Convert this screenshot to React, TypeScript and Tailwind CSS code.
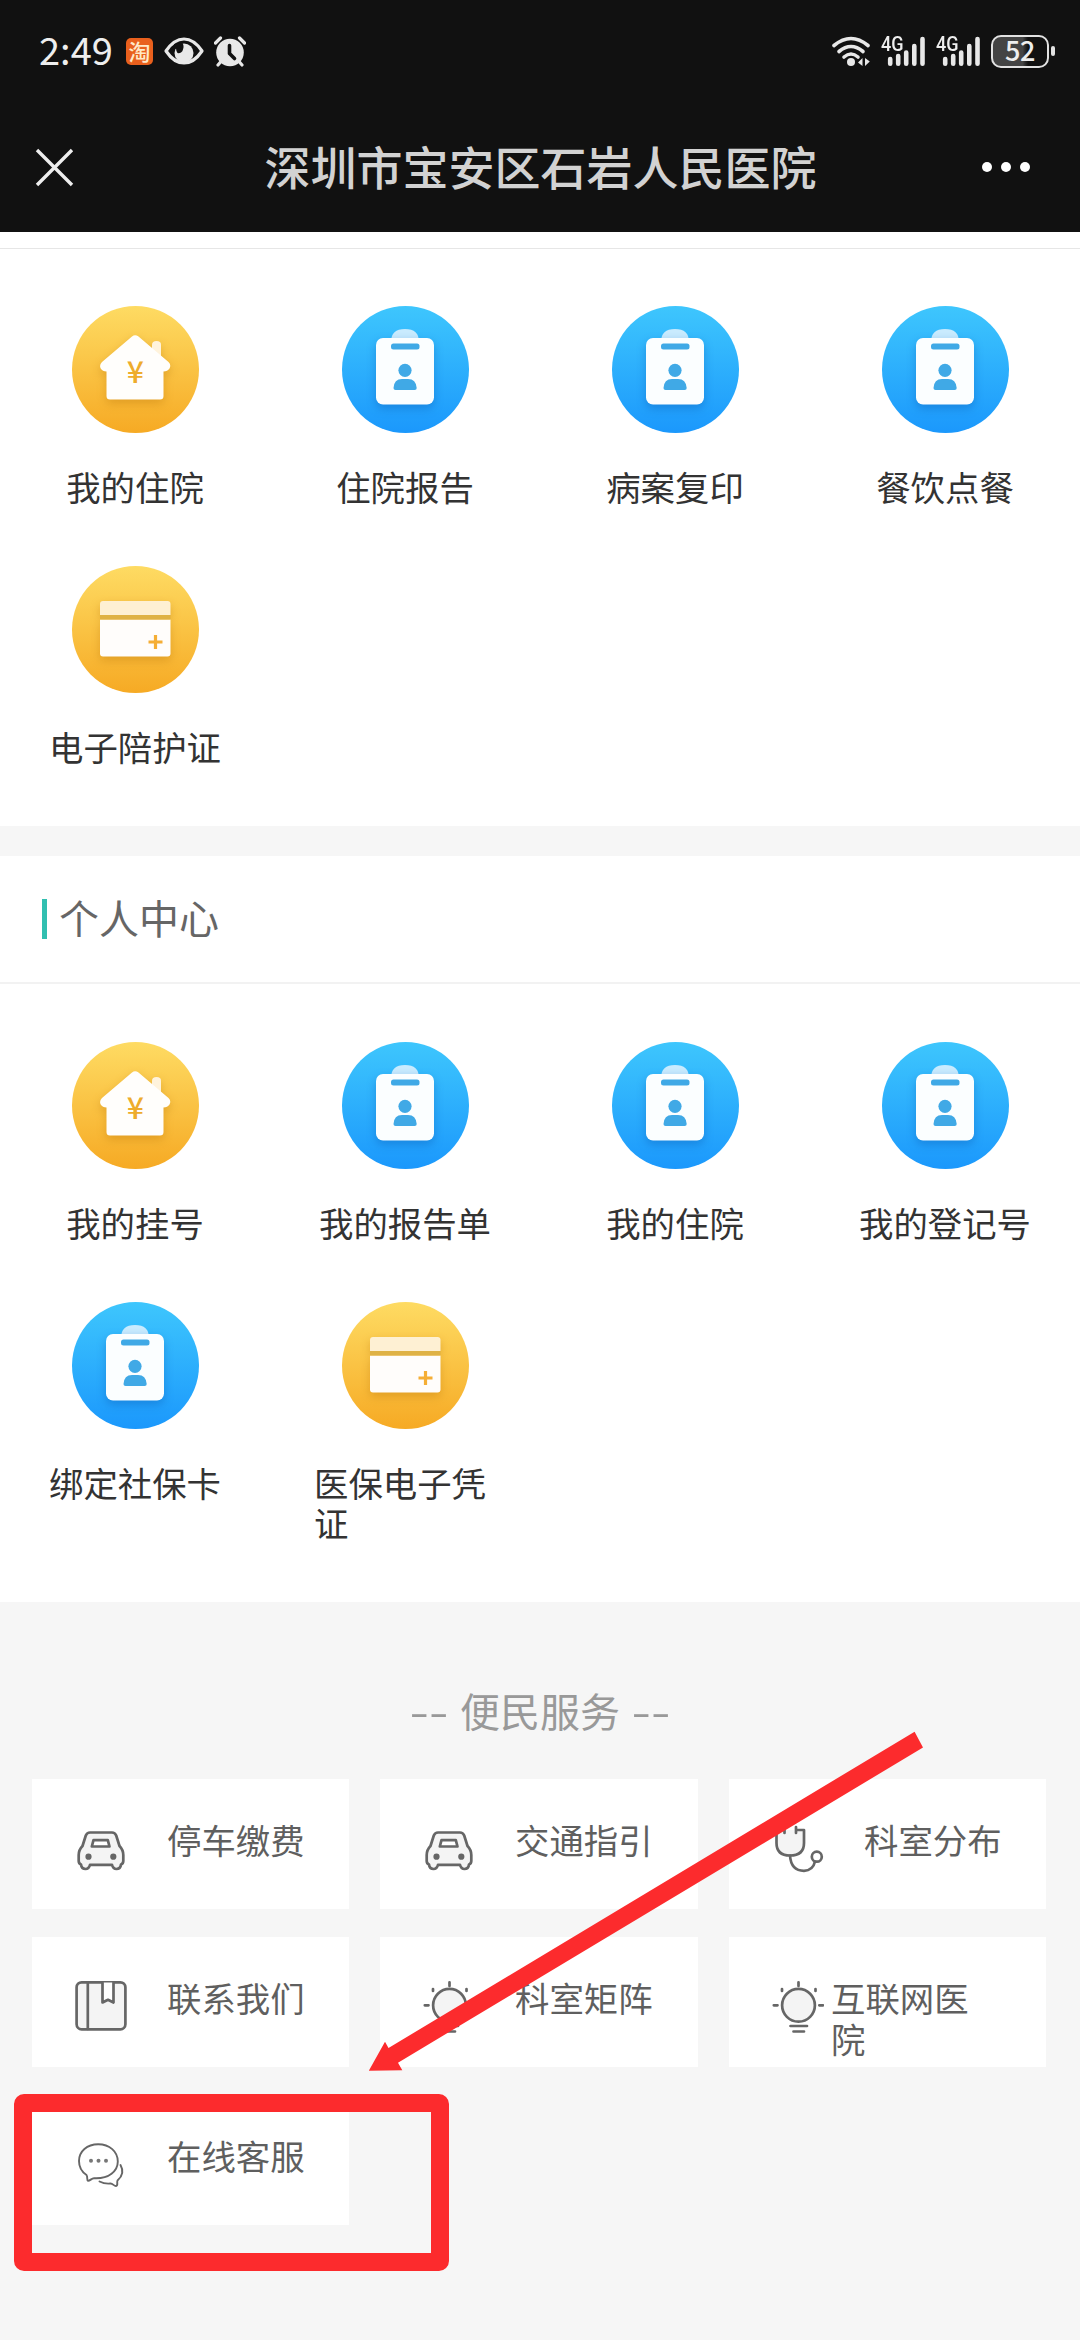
import type { ReactNode } from "react";

type Kind = "house" | "clip" | "card";

const blueDefs = (id: string) => (
  <defs>
    <linearGradient id={id} x1="0" y1="0" x2="0" y2="1">
      <stop offset="0" stopColor="#3ec6fd" />
      <stop offset="1" stopColor="#1b98fc" />
    </linearGradient>
  </defs>
);

const goldDefs = (id: string) => (
  <defs>
    <linearGradient id={id} x1="0" y1="0" x2="0" y2="1">
      <stop offset="0" stopColor="#fedb63" />
      <stop offset="1" stopColor="#f6aa24" />
    </linearGradient>
  </defs>
);

function HouseIcon() {
  return (
    <svg className="size-[127px]" viewBox="0 0 127 127">
      {goldDefs("gold-house")}
      <circle cx="63.5" cy="63.5" r="63.5" fill="url(#gold-house)" />
      <g className="drop-shadow-[0_4px_5px_rgba(190,120,10,0.4)]">
        <path d="M80 50V38.500Q80 35 84.500 35Q89 35 89 38.500V54Z" fill="#fff3dc" />
        <path
          d="M60 30.500Q63 28 66.500 30.500L96.500 56Q99.500 59 97.500 62.500Q95.500 65.500 91.500 65.500V90Q91.500 93.500 88 93.500H38Q34.500 93.500 34.500 90V65.500Q30.500 65.500 28.700 62.500Q27 59 30 56Z"
          fill="#fffefc"
        />
      </g>
      <text x="63.200" y="76.500" textAnchor="middle" fontFamily="Noto Sans CJK SC" fontWeight="500" fontSize="30" fill="#eeac2c">¥</text>
    </svg>
  );
}

function ClipboardIcon() {
  return (
    <svg className="size-[127px]" viewBox="0 0 127 127">
      {blueDefs("blue-clip")}
      <circle cx="63.500" cy="63.500" r="63.500" fill="url(#blue-clip)" />
      <path d="M49 36Q49 23 63 23Q77 23 77 36Z" fill="#c9ebfe" />
      <rect className="drop-shadow-[0_4px_5px_rgba(10,90,180,0.4)]" x="34" y="32" width="58" height="66.500" rx="7" fill="#fbfeff" />
      <rect x="49" y="37.500" width="28.500" height="6" rx="2.500" fill="#40a9e6" />
      <circle cx="63" cy="64.300" r="6.600" fill="#40a9e6" />
      <path d="M51.500 82Q52 73 60 73H66Q74 73 74.700 82Q74.700 84 72.700 84H53.500Q51.500 84 51.500 82Z" fill="#40a9e6" />
    </svg>
  );
}

function CardIcon() {
  return (
    <svg className="size-[127px]" viewBox="0 0 127 127">
      {goldDefs("gold-card")}
      <circle cx="63.500" cy="63.500" r="63.500" fill="url(#gold-card)" />
      <g className="drop-shadow-[0_4px_5px_rgba(190,120,10,0.4)]">
        <path d="M28 49V38Q28 35 31 35H95.500Q98.500 35 98.500 38V49Z" fill="#fef0d3" />
        <path d="M28 53.500H98.500V87.500Q98.500 90.500 95.500 90.500H31Q28 90.500 28 87.500Z" fill="#fffdfb" />
      </g>
      <path d="M28 49H98.500V53.500H28Z" fill="#dfb245" />
      <path d="M83.500 69V83M76.500 76H90.500" stroke="#f5ae35" strokeWidth="3.200" />
    </svg>
  );
}

function Shortcut({ kind, label }: { kind: Kind; label: string }) {
  return (
    <div className="flex h-[260px] flex-col items-center">
      {kind === "house" ? <HouseIcon /> : kind === "clip" ? <ClipboardIcon /> : <CardIcon />}
      <div className="mt-[33px] max-w-[182px] text-[34.4px] leading-[40px] text-[#333]">{label}</div>
    </div>
  );
}

function Outline({ children }: { children: ReactNode }) {
  return (
    <svg
      className="h-[54px] w-[52px] shrink-0"
      viewBox="0 0 52 54"
      fill="none"
      stroke="#666"
      strokeWidth="2.700"
      strokeLinecap="round"
      strokeLinejoin="round"
    >
      {children}
    </svg>
  );
}

const car = (
  <Outline>
    <path
      d="M15 11.500H37Q40 11.500 41.200 14.500L44.500 25Q48.300 29 48.300 34V40Q48.300 42.500 46 43.500Q45.500 48 41.500 48Q38 48 37 43.800H15Q14 48 10.500 48Q6.500 48 6 43.500Q3.700 42.500 3.700 40V34Q3.700 29 7.500 25L10.800 14.500Q12 11.500 15 11.500Z"
      fill="#f4f4f4"
    />
    <path d="M18.500 19.200H32.800L34.500 25.500H16.800Z" fill="#fff" />
    <circle cx="13.500" cy="35.700" r="3.100" fill="#666" stroke="none" />
    <circle cx="38.300" cy="35.700" r="3.100" fill="#666" stroke="none" />
  </Outline>
);

const stethoscope = (
  <Outline>
    <path d="M12.500 6V12M12.500 9H4.500V22Q4.500 34.500 18 34.500Q32 34.500 32 22V9H24M24 6V12" fill="#f4f4f4" />
    <path d="M18 34.500Q19 49.800 32 49.800Q41 49.500 43 40.500" />
    <circle cx="44.800" cy="35.700" r="5" />
  </Outline>
);

const book = (
  <Outline>
    <rect x="1.600" y="3.300" width="48.800" height="47" rx="5" fill="#f4f4f4" />
    <path d="M12.800 3.500V50" />
    <path d="M27.500 3.500V23.500L33 20.800L38.500 23.500V3.500" fill="#fff" />
  </Outline>
);

const bulb = (
  <Outline>
    <circle cx="26.500" cy="26.300" r="16.400" fill="#f4f4f4" />
    <path d="M26.500 3.300V7M1.800 26.300H5.500M47.300 26.300H51M10 10V12M43.500 10V12M18.500 47H35M21.500 52.500H32" />
  </Outline>
);

const chat = (
  <Outline>
    <g strokeWidth="1.900">
      <path d="M23.200 7.200C12 7.200 4 14.500 4 24C4 30 7 35 11.500 38C13 40 11.500 43.500 13 43.800C15 44 16.500 41.200 19 41.200C34 42 42.800 34 42.800 24.500C42.800 14.500 34.500 7.200 23.200 7.200Z" />
      <path d="M45.500 28C49.500 35 46.500 40 42.500 43.500C41.500 46 43.500 48.500 41 49C39 49.200 38 46.500 35.500 46.500C31 47 27.500 46 24.500 44.500" />
    </g>
    <g fill="#777" stroke="none">
      <circle cx="16" cy="23.700" r="2" />
      <circle cx="23.500" cy="23.700" r="2" />
      <circle cx="31" cy="23.700" r="2" />
    </g>
  </Outline>
);

const services: { label: string; icon: ReactNode }[] = [
  { label: "停车缴费", icon: car },
  { label: "交通指引", icon: car },
  { label: "科室分布", icon: stethoscope },
  { label: "联系我们", icon: book },
  { label: "科室矩阵", icon: bulb },
  { label: "互联网医院", icon: bulb },
  { label: "在线客服", icon: chat },
];

const inpatient: { kind: Kind; label: string }[] = [
  { kind: "house", label: "我的住院" },
  { kind: "clip", label: "住院报告" },
  { kind: "clip", label: "病案复印" },
  { kind: "clip", label: "餐饮点餐" },
  { kind: "card", label: "电子陪护证" },
];

const personal: { kind: Kind; label: string }[] = [
  { kind: "house", label: "我的挂号" },
  { kind: "clip", label: "我的报告单" },
  { kind: "clip", label: "我的住院" },
  { kind: "clip", label: "我的登记号" },
  { kind: "clip", label: "绑定社保卡" },
  { kind: "card", label: "医保电子凭证" },
];

function Signal() {
  return (
    <div className="relative h-[44px] w-[44px]">
      <svg className="absolute inset-0 size-full" viewBox="0 0 44 44">
        <path d="M9.200 30V34.700M17.200 27V34.700M25.200 23.500V34.700M33.300 17V34.700M41.500 10V34.700" stroke="#e8e8e8" strokeWidth="4.600" strokeLinecap="round" />
      </svg>
      <span className="absolute left-0 top-[3px] origin-left scale-x-[0.88] font-[Roboto] text-[20.500px] font-medium leading-[24px] text-[#eee]">4G</span>
    </div>
  );
}

function StatusBar() {
  return (
    <div className="flex h-[102px] items-center pl-[39px] pr-[25px]">
      <div className="mb-[5px] w-[87px] font-['Noto_Sans_CJK_SC'] text-[38px] leading-none text-[#eee]">2:49</div>
      <div className="flex size-[27px] items-center justify-center rounded-[5px] bg-[#e9601d] pb-[2px] text-[22px] font-medium leading-none text-[#ffe9c8]">淘</div>
      <svg className="ml-[11px] h-[28px] w-[40px]" viewBox="0 0 40 28">
        <path d="M2 14Q10 2 20 2Q30 2 38 14Q30 26 20 26Q10 26 2 14Z" fill="none" stroke="#e8e8e8" strokeWidth="3.200" strokeLinejoin="round" />
        <circle cx="20" cy="16" r="9.500" fill="#e8e8e8" />
        <path d="M10 7L18 5.500Q20.500 8.500 19 12.500A4.500 4.500 0 0 1 13.500 16Q12 13.500 12 11.500Q10 12 9.500 15Z" fill="#111" />
      </svg>
      <svg className="ml-[10px] h-[31px] w-[32px]" viewBox="0 0 32 31">
        <circle cx="16" cy="16.500" r="13.800" fill="#e8e8e8" />
        <path d="M1.500 7L6.500 2M30.500 7L25.500 2M7 25.500L4 29M25 25.500L28 29" stroke="#e8e8e8" strokeWidth="3.200" strokeLinecap="round" />
        <path d="M15.500 9.500V17.500L20.500 22.500" fill="none" stroke="#111" strokeWidth="3.600" strokeLinecap="round" strokeLinejoin="round" />
      </svg>
      <svg className="ml-auto h-[31px] w-[38px]" viewBox="0 0 38 31">
        <g fill="none" stroke="#e8e8e8" strokeWidth="3.600" strokeLinecap="round">
          <path d="M2 9.500Q19 -4.500 36 9.500" />
          <path d="M7 15.500Q19 5.500 31 15.500" />
          <path d="M12 21Q19 15 26 21" />
        </g>
        <circle cx="19" cy="26" r="4" fill="#e8e8e8" />
        <path d="M30.500 22V30L26 26.500ZM33 22V30L37.800 25.500Z" fill="#e8e8e8" />
      </svg>
      <div className="ml-[11px] flex gap-[11px]">
        <Signal />
        <Signal />
      </div>
      <div className="ml-[11px] flex h-[33px] w-[58px] items-center justify-center rounded-[10px] border-2 border-[#e2e2e2] bg-linear-to-r from-[#444] from-55% to-[#111] to-65% pb-[3px] font-['Noto_Sans_CJK_SC'] text-[27px] font-medium leading-none tracking-[-0.5px] text-[#eee]">
        52
      </div>
      <div className="ml-[2px] h-[10px] w-[4px] rounded-[2px] bg-[#e2e2e2]" />
    </div>
  );
}

function ShortcutGrid({ items }: { items: { kind: Kind; label: string }[] }) {
  return (
    <div className="grid grid-cols-4">
      {items.map((item) => (
        <Shortcut key={item.label} kind={item.kind} label={item.label} />
      ))}
    </div>
  );
}

export default function App() {
  return (
    <div className="relative h-[2340px] w-[1080px] overflow-hidden bg-[#f6f6f6] font-['Noto_Sans_CJK_SC',sans-serif]">
      <header className="h-[232px] bg-[#111]">
        <StatusBar />
        <div className="flex h-[130px] items-center justify-between pl-[35px] pr-[50px]">
          <svg className="size-[39px]" viewBox="0 0 39 39">
            <path d="M2 2L37 37M37 2L2 37" stroke="#eee" strokeWidth="3.400" />
          </svg>
          <h1 className="mb-[5px] ml-[25px] text-[46px] font-medium leading-none text-[#d2d2d2]">深圳市宝安区石岩人民医院</h1>
          <div className="flex gap-[9px]">
            <i className="size-[10px] rounded-full bg-white" />
            <i className="size-[10px] rounded-full bg-white" />
            <i className="size-[10px] rounded-full bg-white" />
          </div>
        </div>
      </header>

      <section className="h-[594px] bg-white pt-[16px]">
        <div className="border-t border-[#e6e6e6] pt-[57px]">
          <ShortcutGrid items={inpatient} />
        </div>
      </section>

      <section className="mt-[30px] h-[746px] bg-white">
        <div className="flex h-[128px] items-center border-b-2 border-[#f2f2f2] pl-[42px]">
          <div className="h-[40px] w-[5px] bg-[#31bfb0]" />
          <h2 className="mb-[4px] ml-[12px] text-[40px] leading-none text-[#666]">个人中心</h2>
        </div>
        <div className="pt-[58px]">
          <ShortcutGrid items={personal} />
        </div>
      </section>

      <section>
        <h2 className="flex h-[177px] items-center justify-center gap-[17px] pt-[38px] text-[40px] leading-none text-[#999]">
          <span className="scale-x-[1.400]">--</span>
          <span>便民服务</span>
          <span className="scale-x-[1.400]">--</span>
        </h2>
        <div className="grid grid-cols-[317px_318px_317px] gap-x-[31px] gap-y-[28px] pl-[32px]">
          {services.map(({ label, icon }) => (
            <div key={label} className="flex h-[130px] items-start bg-white pl-[43px] pt-[42px]">
              {icon}
              <div className={label.length > 4 ? "-mt-[2px] ml-[7px] w-[140px] text-[34.4px] leading-[41px] text-[#5f5f5f]" : "-mt-[2px] ml-[40px] text-[34.4px] leading-[41px] text-[#5f5f5f]"}>
                {label}
              </div>
            </div>
          ))}
        </div>
      </section>

      {/* Annotation overlay: highlighted service and pointer arrow */}
      <div className="absolute left-[14px] top-[2094px] h-[177px] w-[435px] rounded-[10px] border-[18px] border-[#fc2b2d]" />
      <svg className="absolute left-[360px] top-[1725px] h-[350px] w-[570px]" viewBox="360 1725 570 350">
        <path d="M914.600 1731.700L923 1747.500L398 2062.700L402.300 2070.300L368.800 2070.800L385 2041.700L388.500 2048Z" fill="#fc2b2d" />
      </svg>
    </div>
  );
}
